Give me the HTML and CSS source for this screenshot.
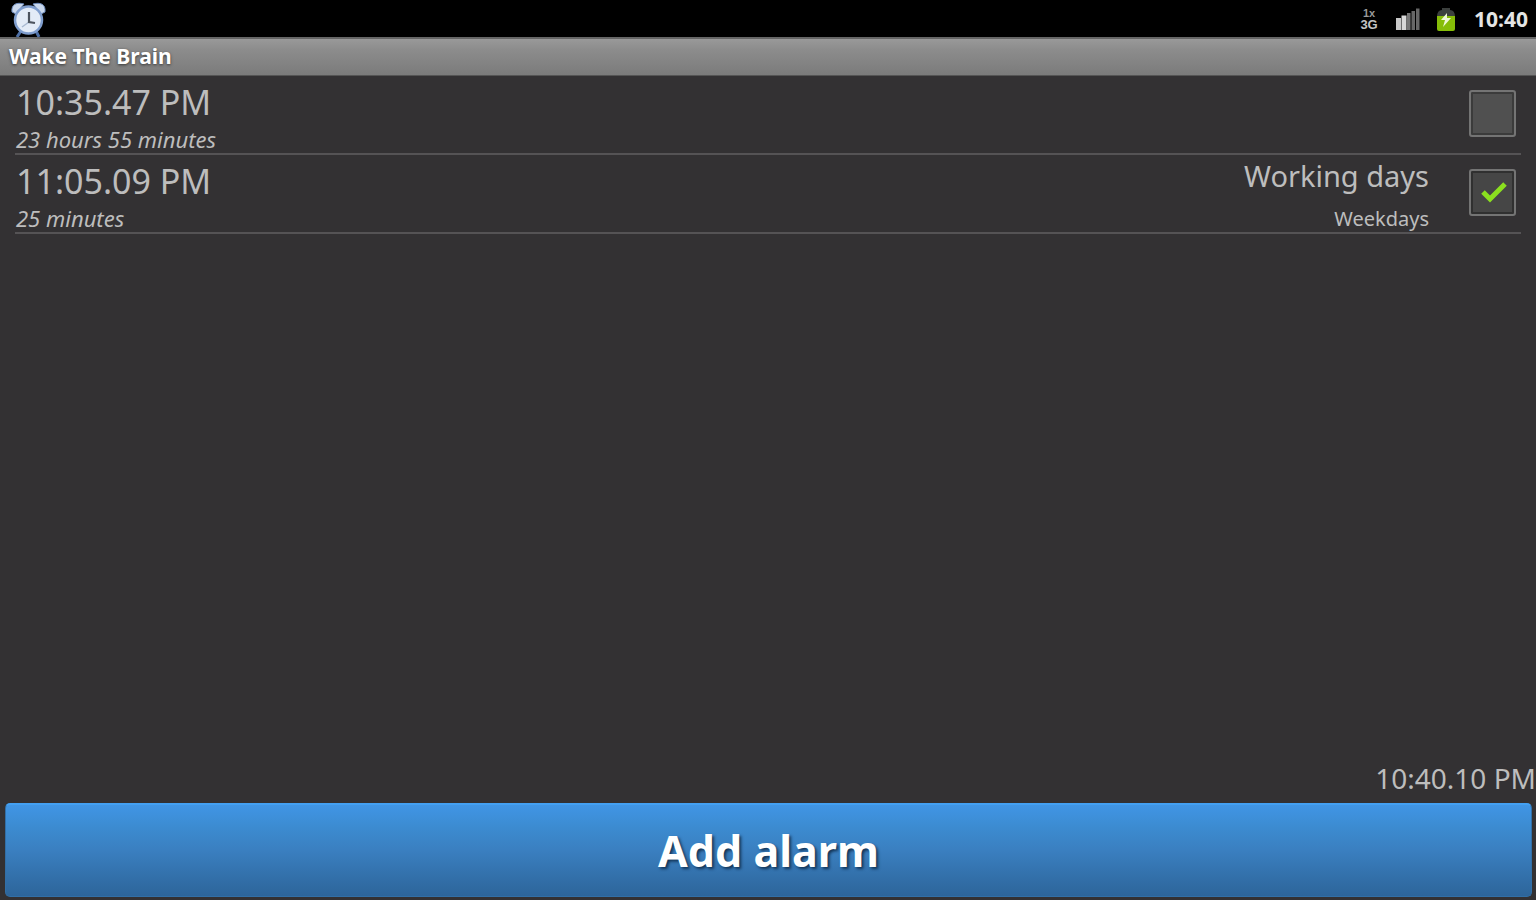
FILE: index.html
```html
<!DOCTYPE html>
<html lang="en">
<head>
<meta charset="utf-8">
<title>Wake The Brain</title>
<link rel="stylesheet" href="styles.css">
</head>
<body>
<div class="statusbar">
  <svg class="alarm-icon" width="36" height="36" viewBox="0 0 36 36" role="img" aria-label="Alarm set">
    <path d="M11 30 7 36M26 30l3 6" stroke="#4d6fa5" stroke-width="3"/>
    <path d="M2 11C1 3 7 1 14 3L6 13zM35 11C36 3 30 1 23 3l8 10z" fill="#c9d7ec" stroke="#6d8bbb" stroke-width="1"/>
    <circle cx="18.500" cy="19" r="13.500" fill="#e3ebf7" stroke="#7f9dcd" stroke-width="2.500"/>
    <path d="M19 21l-7 5" fill="none" stroke="#a8b9d2" stroke-width="1.500"/>
    <path d="M19 11v10l6 1" fill="none" stroke="#4c535e" stroke-width="2.200"/>
  </svg>
  <div class="indicators">
    <div class="network"><span class="net-1x">1x</span><span class="net-3g">3G</span></div>
    <svg class="signal-icon" width="26" height="24" viewBox="0 0 26 24" role="img" aria-label="Signal strength">
      <path d="M2 11h5v12H2z" fill="#c8c8c8"/><path d="M7.500 8.500h5V23h-5z" fill="#d8d8d8"/>
      <path d="M13 6h3.500v17H13z" fill="#777"/><path d="M17.500 4H21v19h-3.500z" fill="#666"/><path d="M22 1.500h3.500V23H22z" fill="#666"/>
    </svg>
    <svg class="battery-icon" width="20" height="26" viewBox="0 0 20 26" role="img" aria-label="Battery charging">
      <path d="M1 11Q1 4 6 4V2h8v2q5 0 5 7z" fill="#3c403e"/>
      <path d="M1 10h18v13q0 2-2 2H3q-2 0-2-2z" fill="#86bd08"/>
      <path d="M11 7 5 14h4l-2 7 8-9h-4z" fill="#eef7d6"/>
    </svg>
    <span class="status-time">10:40</span>
  </div>
</div>
<h1 class="titlebar">Wake The Brain</h1>
<main class="alarms">
  <div class="alarm">
    <div class="when">
      <label class="time" for="alarm-1">10:35.47 PM</label>
      <span class="remaining">23 hours 55 minutes</span>
    </div>
    <input class="toggle" id="alarm-1" type="checkbox">
  </div>
  <div class="alarm">
    <div class="when">
      <label class="time" for="alarm-2">11:05.09 PM</label>
      <span class="remaining">25 minutes</span>
    </div>
    <div class="what">
      <span class="name">Working days</span>
      <span class="repeat">Weekdays</span>
    </div>
    <span class="check">
      <input class="toggle" id="alarm-2" type="checkbox" checked>
      <svg class="tick" width="26" height="22" viewBox="0 0 26 22" aria-hidden="true"><path d="M2 11l7 7L24 3" fill="none" stroke="#8be01f" stroke-width="5"/></svg>
    </span>
  </div>
</main>
<footer class="footer">
  <div class="clock">10:40.10 PM</div>
  <button class="add" type="button">Add alarm</button>
</footer>
</body>
</html>
```
FILE: styles.css
```css
* { box-sizing: border-box; }
body {
  margin: 0;
  min-height: 100vh;
  display: flex;
  flex-direction: column;
  background: #333133;
  color: #bdbdbd;
  font-family: "Noto Sans", "Open Sans", sans-serif;
}
.statusbar {
  height: 37px;
  padding: 0 8px 0 10px;
  display: flex;
  align-items: center;
  justify-content: space-between;
  background: #000;
}
.alarm-icon { flex: none; }
.indicators { display: flex; align-items: center; gap: 16px; }
.network {
  width: 18px;
  padding-top: 2px;
  display: flex;
  flex-direction: column;
  align-items: center;
  font-family: "Liberation Sans", sans-serif;
  font-weight: 700;
}
.net-1x { color: #999; font-size: 11px; line-height: 9px; }
.net-3g { color: #c4c4c4; font-size: 13px; line-height: 13px; }
.status-time {
  margin-left: 2px;
  color: #e4e4e4;
  font-size: 21px;
  line-height: 36px;
  font-weight: 700;
}
.titlebar {
  margin: 0;
  height: 39px;
  padding: 0 9px;
  border-top: 2px solid #666;
  border-bottom: 1px solid #555;
  background: linear-gradient(#999, #8c8c8c 30%, #7b7b7b);
  color: #fff;
  font-size: 21px;
  line-height: 34px;
  font-weight: 700;
  text-shadow: 0 1px 3px #333;
}
.alarms { flex: 1; padding: 0 15px; }
.alarm {
  height: 79px;
  padding: 0 5px 2px 1px;
  display: flex;
  align-items: center;
  border-bottom: 2px solid #555355;
}
.when { flex: 1; display: flex; flex-direction: column; padding-top: 3px; }
.what { display: flex; flex-direction: column; align-items: flex-end; margin-right: 40px; padding-top: 12px; }
.time { font-size: 34px; line-height: 48px; }
.remaining { font-size: 22px; line-height: 27px; font-style: italic; }
.name { font-size: 29px; line-height: 40px; }
.repeat { font-size: 20px; line-height: 46px; }
.check { position: relative; display: flex; }
.toggle {
  appearance: none;
  width: 47px;
  height: 47px;
  margin: 0;
  border: 2px solid #747474;
  border-radius: 3px;
  background: #505050;
  box-shadow: inset 0 0 0 2px #3b3b3b;
}
.toggle:checked { background: #464646; box-shadow: inset 0 0 0 2px #303030; }
.tick { position: absolute; left: 12px; top: 12px; pointer-events: none; }
.footer { display: flex; flex-direction: column; padding: 0 4px 3px 5px; }
.clock {
  align-self: flex-end;
  margin-right: -4px;
  padding-bottom: 4px;
  font-size: 28px;
  line-height: 42px;
}
.add {
  height: 94px;
  border: 1px solid #326fa6;
  border-top: 2px solid #43a0f2;
  border-radius: 5px;
  background: linear-gradient(#4095e5, #3c8bd0 25%, #3a7fc0 50%, #2d659a);
  color: #fff;
  font-family: inherit;
  font-size: 43px;
  font-weight: 700;
  text-shadow: 2px 2px 3px #133456;
}
```
